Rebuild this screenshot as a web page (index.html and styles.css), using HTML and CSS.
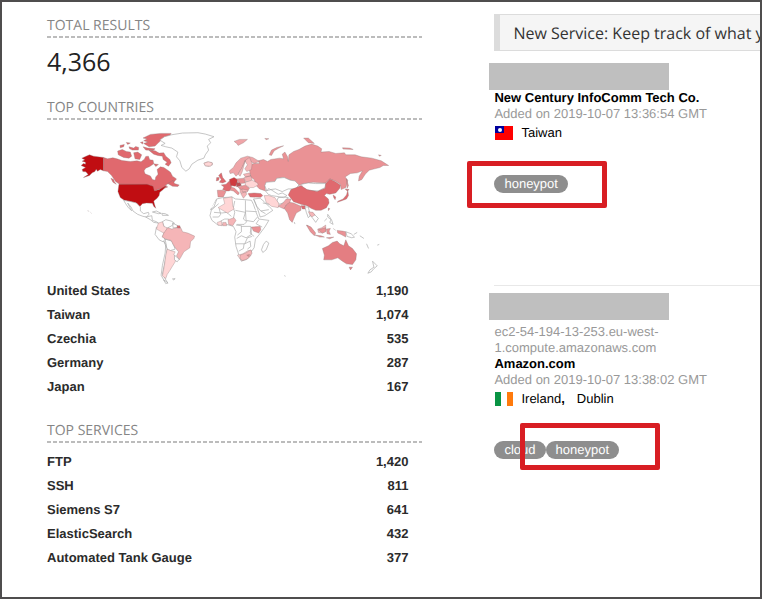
FILE: index.html
```html
<!DOCTYPE html>
<html lang="en">
<head>
<meta charset="utf-8">
<meta name="viewport" content="width=device-width, initial-scale=1">
<title>Search results</title>
<link rel="stylesheet" href="styles.css">
</head>
<body>
<div class="page">
<aside class="summary">
  <h2 class="heading">TOTAL RESULTS</h2>
  <p class="total">4,366</p>
  <h2 class="heading">TOP COUNTRIES</h2>
  <svg class="map" viewBox="-69 0 1122 474" role="img" aria-label="Results by country">
    <!-- Americas -->
    <g>
      <path class="c9" d="M35 114L46 109L58 104L70 108L100 112V152L90 148L82 153L78 147L74 154L66 158L58 166L40 172L54 163L47 155L38 154L36 148L46 142L33 136L40 130L46 132L46 126L36 123L44 119Z"/>
      <path class="c6" d="M100 112L112 116L128 113L140 116L155 121L180 124L200 122L212 125L222 117L226 109L234 108L238 119L248 120L250 131L238 139L226 144L221 152L224 161L240 167L246 178L254 180L256 170L263 162L260 148L270 140L280 142L292 150L300 156L306 168L318 176L310 186L296 188L284 196L292 200L282 204L266 206L250 214L246 198L230 194L148 192L136 184L124 166L112 154L100 152Z"/>
      <path class="c6" d="M218 54L240 43L270 40L302 40L298 46L280 53L266 66L254 78L236 80L220 70L232 66L220 62L230 57Z"/>
      <path class="c6" d="M142 93L156 88L168 94L180 96L184 108L176 114L160 112L144 104ZM149 76L162 73L160 80L150 83ZM168 67L180 69L172 73ZM176 80L190 84L196 79L205 82L204 90L186 90L178 86ZM190 98L202 96L214 104L208 118L194 116ZM218 80L232 84L254 86L248 91L226 90ZM236 91L254 92L266 99L280 98L286 108L298 118L302 128L294 138L284 132L290 126L278 118L276 108L262 106L250 102ZM210 67L218 65L217 72ZM250 131L264 133L256 139ZM292 190L308 180L312 190L326 194L322 199L306 198Z"/>
      <path class="c6" d="M122 174L130 178L132 184L138 192L128 186Z"/>
      <path class="c0" d="M268 60L282 50L304 44L336 39L382 38L404 42L430 50L414 58L420 68L410 78L414 90L404 104L400 114L382 120L364 132L356 146L346 153L334 142L328 122L318 110L322 96L304 84L286 80L272 76L284 70Z"/>
      <path class="c9" d="M146 192H230L248 198L252 212L268 207L288 196L278 208L268 216L266 226L260 234L250 242L252 251L256 264L250 258L246 249L228 248L216 250L208 259L198 248L182 244L162 240L150 232L143 214Z"/>
      <path class="c2" d="M400 129L410 125L424 127L426 134L414 139L404 137Z"/>
      <path class="c0" d="M160 240L182 244L198 248L210 260L210 272L220 280L234 276L236 282L228 290L218 288L202 282L188 272L182 260L172 248L180 264L184 271L174 262L166 250Z"/>
      <path class="c0" d="M226 290L244 286L246 300L258 304L264 308L250 306L240 298ZM246 275L258 272L272 279L264 280ZM274 279L284 280L294 285L276 285ZM258 320L254 342L266 358L278 364L284 356L276 348L282 336L272 330ZM276 304L286 298L302 302L312 308L304 316L292 322L284 328L280 316ZM306 308L322 316L320 322L308 322ZM284 356L304 362L310 376L314 386L300 390L290 388Z"/>
      <path class="c2" d="M264 308L276 304L280 318L290 322L286 332L280 338L258 326Z"/>
      <path class="c6" d="M320 316L328 316L330 323L320 324Z"/>
      <path class="c3" d="M280 338L292 322L304 326L318 322L332 324L336 334L352 338L372 347L370 354L360 364L358 382L340 394L330 412L326 418L318 406L324 394L316 384L308 372L302 360L286 356L275 350Z"/>
      <path class="c0" d="M280 362L286 372L284 398L276 434L272 464L282 482L292 488L284 474L276 460L282 430L288 400L290 386Z"/>
      <path class="c2" d="M290 386L300 390L314 394L310 402L318 412L314 424L304 440L298 450L290 462L286 474L276 466L282 434L286 404Z"/>
      <path class="c0" d="M312 404L326 416L320 424L312 418ZM280 478L292 486L286 489ZM306 475L314 474L310 478Z"/>
      <path class="c2" d="M52 271L57 273M61 276L64 279"/>
    </g>
    <!-- Europe, Africa, Asia and Oceania -->
    <g transform="translate(390 0)">
      <path class="c5" d="M146 150L150 134L160 130L176 130L172 122L188 118L200 124L210 118L236 114L248 116L244 102L252 96L260 110L262 124L264 104L278 94L294 88L312 78L332 72L350 78L362 86L360 96L384 94L404 100L430 98L434 104L462 104L480 110L512 114L540 122L562 136L546 136L536 142L520 146L504 150L492 162L482 178L472 182L474 168L484 152L468 158L448 160L432 170L440 180L434 202L420 208L418 192L402 182L386 176L374 188L336 186L302 192L294 196L280 184L262 178L246 172L226 176L222 186L200 188L192 196L194 212L176 206L166 196L160 178L150 170Z"/>
      <path class="c5" d="M205 104L212 90L228 82L248 77L234 84L220 92L212 106ZM308 54L322 54L340 70L322 68ZM424 83L446 84L456 88L426 87ZM532 104L540 106L534 108ZM192 55L204 56L196 59ZM436 176L442 196L438 204Z"/>
      <path class="c4" d="M100 64L116 58L140 58L128 68L112 76L108 70ZM86 152L98 142L106 128L120 114L140 108L156 112L176 124L160 130L146 122L132 124L124 142L112 162L106 168L98 158L88 160Z"/>
      <path class="c3" d="M132 122L146 112L154 130L152 148L138 154L132 146L140 134ZM112 162L124 142L134 120L124 156L118 168Z"/>
      <path class="c6" d="M54 166L62 158L66 172L76 184L66 188L56 186L62 178ZM48 172L56 172L54 180L47 182Z"/>
      <path class="c6" d="M62 194L76 192L86 182L92 186L92 204L86 212L76 212L66 208L70 200Z"/>
      <path class="c5" d="M50 210L66 210L76 214L68 230L52 230Z"/>
      <path class="c8" d="M86 178L100 172L110 178L110 190L104 198L90 196Z"/>
      <path class="c7" d="M106 188L118 186L122 196L108 200Z"/>
      <path class="c5" d="M108 176L130 174L134 188L120 190L110 182ZM92 200L102 204L116 218L112 224L98 212L88 210ZM112 200L134 194L146 204L140 214L122 212Z"/>
      <path class="c3" d="M130 172L150 166L154 178L146 184L134 184ZM128 162L146 158L150 168L134 170ZM118 206L130 210L128 224L118 216Z"/>
      <path class="c2" d="M134 186L154 180L170 188L172 194L158 202L146 202L134 194ZM10 129L24 125L36 129L30 138L14 137Z"/>
      <path class="c3" d="M120 220L134 214L138 222L128 234ZM124 206L142 210L138 216L124 214Z"/>
      <path class="c6" d="M142 220L160 218L180 220L186 226L180 231L148 230Z"/>
      <path class="c0" d="M192 196L196 186L222 184L228 174L250 172L268 180L282 182L294 194L284 206L262 206L244 214L224 206L208 208L204 204L198 212ZM302 192L322 188L344 190L374 190L372 202L352 212L320 210L304 202ZM194 212L210 208L232 222L244 218L258 226L248 232L226 228L212 226L202 222ZM232 232L248 230L262 232L254 246L234 252L228 242Z"/>
      <path class="c6" d="M262 224L270 208L286 202L300 196L318 208L348 214L372 204L374 190L386 176L402 184L418 194L416 204L404 218L386 222L376 220L370 226L382 236L384 248L376 262L360 270L344 270L330 264L318 256L300 252L278 244Z"/>
      <path class="c2" d="M190 226L204 226L222 232L234 250L232 262L212 258L196 246Z"/>
      <path class="c4" d="M232 258L246 248L256 236L270 236L266 248L256 254L250 266Z"/>
      <path class="c5" d="M250 264L256 254L266 246L278 248L300 258L300 270L286 278L278 296L274 306L266 298L260 278Z"/>
      <path class="c6" d="M300 256L312 256L314 266L304 266ZM412 242L426 236L436 224L440 210L442 226L436 236L420 242L408 246ZM432 206L444 208L438 212ZM396 224L404 230L402 238L398 232ZM382 263L386 265L382 271Z"/>
      <path class="c0" d="M158 236L178 234L190 244L208 262L216 270L192 286L178 290L170 264ZM160 238L168 258L180 272L194 280M186 248L206 252M180 272L204 268M312 260L322 260L328 286L322 292L316 276ZM326 284L336 278L352 294L344 306L334 292ZM280 305L282 311"/>
      <path class="c3" d="M322 274L336 276L342 284L332 290L326 282ZM318 314L330 322L342 342L332 336ZM350 326L362 322L374 314L374 332L364 338L352 336Z"/>
      <path class="c5" d="M316 314L330 320L344 338L340 346L328 334ZM342 344L360 346L370 350L356 350ZM352 328L374 322L374 334L364 338ZM376 326L388 324L384 332L388 342L378 340ZM376 352L398 350L386 355ZM396 324L404 330M408 330L424 332L434 334L434 350L420 342L410 338Z"/>
      <path class="c0" d="M434 334L450 340L460 350L452 352L438 348ZM458 342L468 336M476 346L488 354M496 370L502 384M528 374L534 372M380 282L386 290L392 300L396 312L386 306L390 298L380 290ZM370 302L378 294M514 422L522 430L528 436L518 444L510 454L500 458L506 448L518 440ZM250 465L254 467"/>
      <path class="au" d="M364 384L382 376L394 366L408 362L416 370L428 376L434 358L442 376L454 384L466 400L464 418L454 432L436 430L424 422L410 412L392 418L368 418L370 404ZM444 440L454 440L448 448Z"/>
      <path class="c0" d="M48 236L66 232L94 230L104 236L130 238L152 240L158 252L166 276L174 296L204 300L192 320L174 344L164 356L160 382L148 398L138 414L122 422L116 408L106 378L102 350L106 334L98 318L78 312L52 314L34 300L28 286L34 262Z"/>
      <path class="c0" d="M48 238L40 260L28 268M54 250L34 268M40 276L64 278L78 276L92 288M36 290L54 290L60 282L56 266M60 302L72 296L84 296M102 242L98 262L102 276L98 294M134 240V272L168 274M104 270L134 276L128 296L138 304L130 312L108 312M134 272L136 300L158 304L170 290M106 314L122 316L122 334L110 344M122 318H150L152 342L136 352L122 346L108 354M104 370H132L140 352L154 348M130 370L128 384L114 392M132 370L148 362L150 378L140 386M152 320L148 338L160 348M174 298L166 310L184 320"/>
      <path class="c2" d="M52 262L72 250L68 234L94 230L96 256L100 266L80 278L66 270ZM50 306L62 302L64 316L52 314ZM110 404L126 400L142 390L152 390L150 406L136 418L122 421Z"/>
      <path class="c3" d="M82 298L100 292L106 300L96 316L84 312ZM66 306L76 306L78 316L66 316ZM118 404L134 398L150 388L154 398L142 414L126 420L118 414Z"/>
      <path class="c5" d="M152 320L178 318L180 328L174 338L158 332ZM138 404L146 402L144 408Z"/>
      <path class="c0" d="M196 362L204 368L196 388L186 396L182 388L188 372Z"/>
    </g>
  </svg>
  <table class="counts" aria-label="Top countries">
    <tbody>
      <tr><th scope="row">United States</th><td>1,190</td></tr>
      <tr><th scope="row">Taiwan</th><td>1,074</td></tr>
      <tr><th scope="row">Czechia</th><td>535</td></tr>
      <tr><th scope="row">Germany</th><td>287</td></tr>
      <tr><th scope="row">Japan</th><td>167</td></tr>
    </tbody>
  </table>
  <h2 class="heading heading-services">TOP SERVICES</h2>
  <table class="counts" aria-label="Top services">
    <tbody>
      <tr><th scope="row">FTP</th><td>1,420</td></tr>
      <tr><th scope="row">SSH</th><td>811</td></tr>
      <tr><th scope="row">Siemens S7</th><td>641</td></tr>
      <tr><th scope="row">ElasticSearch</th><td>432</td></tr>
      <tr><th scope="row">Automated Tank Gauge</th><td>377</td></tr>
    </tbody>
  </table>
</aside>
<main class="results">
  <p class="banner">New Service: Keep track of what y</p>
  <article class="result">
    <div class="redacted"></div>
    <p class="org">New Century InfoComm Tech Co.</p>
    <p class="muted">Added on 2019-10-07 13:36:54 GMT</p>
    <p class="place">
      <svg class="flag" viewBox="0 0 18 14" aria-hidden="true"><path fill="#f00" d="M0 0h18v14H0z"/><path fill="#00009c" d="M0 0h9v7H0z"/><circle cx="5" cy="4" r="2" fill="#fff"/></svg>
      <span>Taiwan</span>
    </p>
    <div class="tags"><span class="tag">honeypot</span><span class="mark mark-single"></span></div>
  </article>
  <article class="result">
    <div class="redacted"></div>
    <p class="muted host">ec2-54-194-13-253.eu-west-1.compute.amazonaws.com</p>
    <p class="org">Amazon.com</p>
    <p class="muted">Added on 2019-10-07 13:38:02 GMT</p>
    <p class="place">
      <svg class="flag" viewBox="0 0 18 14" aria-hidden="true"><path fill="#fff" d="M0 0h18v14H0z"/><path fill="#099444" d="M0 0h6v14H0z"/><path fill="#ff7a0c" d="M12 0h6v14h-6z"/></svg>
      <span>Ireland<b>,</b></span><span>Dublin</span>
    </p>
    <div class="tags"><span class="tag">cloud</span><span class="tag">honeypot</span><span class="mark mark-second"></span></div>
  </article>
</main>
</div>
</body>
</html>
```
FILE: styles.css
```css
* {
  box-sizing: border-box;
}

body,
h2,
p {
  margin: 0;
}

body {
  background: #fff;
  color: #000;
  font: 13px/16px "Liberation Sans", Arial, sans-serif;
  text-rendering: geometricPrecision;
}

.page {
  display: grid;
  grid-template-columns: minmax(0, 41fr) minmax(0, 29fr);
  column-gap: 72px;
  min-height: 100vh;
  padding: 12px 0 24px 45px;
  border: 2px solid #4f4d4e;
  overflow: hidden;
}

.summary {
  padding-top: 2px;
}

.heading {
  height: 22px;
  color: #858585;
  font: 14px/20px "Open Sans", sans-serif;
  background: repeating-linear-gradient(90deg, #bcbcbc 0 4px, transparent 4px 6px) left bottom / 100% 2px no-repeat;
}

.heading-services {
  margin: 22px 0 7px;
}

.total {
  margin-bottom: 12px;
  color: #222;
  font: 500 25px/48px "Open Sans", sans-serif;
}

.map {
  display: block;
  width: 100%;
  overflow: visible;
}

.map path {
  stroke: #8d7777;
  stroke-width: 1;
  stroke-linejoin: round;
}

.map .c0 { fill: #fff; stroke: #aaa; stroke-width: 2; }
.map .c2 { fill: #ffd6d6; }
.map .c3 { fill: #f5b5b7; }
.map .c4 { fill: #efa5a8; }
.map .c5 { fill: #ea9295; }
.map .c6 { fill: #e0696e; }
.map .c7 { fill: #b95055; }
.map .c8 { fill: #cf3a3f; }
.map .c9 { fill: #c00d12; }
.map .au { fill: #e47e82; }

.counts {
  width: 100%;
  border-collapse: collapse;
  color: #2b2b2b;
  font-weight: bold;
}

.counts th,
.counts td {
  height: 24px;
  padding: 0;
  text-align: left;
}

.counts td {
  padding-right: 14px;
  text-align: right;
}

.banner {
  height: 37px;
  margin-bottom: 12px;
  padding-left: 13px;
  border: 1px solid #dcdcdc;
  border-width: 1px 0 1px 6px;
  background: #f5f5f5;
  color: #333;
  font: 16px/36px "Open Sans", sans-serif;
  white-space: nowrap;
}

.result + .result {
  margin-top: 92px;
  padding-top: 7px;
  border-top: 1px solid #e8e8e8;
}

.redacted {
  width: 180px;
  height: 27px;
  margin-left: -5px;
  background: #bfbfbf;
}

.org {
  font-weight: bold;
}

.muted {
  color: #999;
}

.host {
  max-width: 200px;
  padding-top: 4px;
}

.place {
  display: flex;
  align-items: center;
  gap: 8px;
  height: 22px;
  padding-left: 1px;
}

.place span + span {
  margin-left: 4px;
}

.flag {
  width: 18px;
  height: 14px;
}

.tags {
  position: relative;
  display: flex;
  margin-top: 31px;
}

.tag {
  padding: 0 10px;
  border-radius: 9px;
  background: #8e8e8e;
  color: #fff;
  line-height: 18px;
}

.mark {
  position: absolute;
  width: 140px;
  height: 47px;
  border: 5px solid #d81e23;
  border-radius: 2px;
}

.mark-single {
  top: -14px;
  left: -27px;
}

.mark-second {
  top: -18px;
  left: 26px;
}
```
